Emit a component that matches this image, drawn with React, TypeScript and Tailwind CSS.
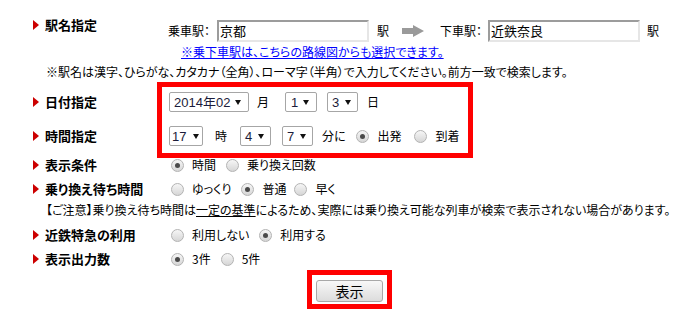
import React from "react";

const Mark = () => (
  <svg width="6" height="10" viewBox="0 0 6 10" className="shrink-0">
    <polygon points="0,0 6,5 0,10" fill="#cc0000" />
  </svg>
);

function Label({ text }: { text: string }) {
  return (
    <div className="flex items-center gap-[6px]">
      <Mark />
      <span className="text-[13px] font-bold leading-[18px] text-black">{text}</span>
    </div>
  );
}

function Radio({ checked, label, gap = "ml-[8px]" }: { checked?: boolean; label: string; gap?: string }) {
  return (
    <span className="flex items-center">
      <span className="flex h-[13px] w-[13px] items-center justify-center rounded-full border border-[#b3b3b3] bg-linear-to-b from-[#f6f6f6] to-[#d6d6d6]">
        {checked && <span className="h-[5px] w-[5px] rounded-full bg-[#4a4a4a]" />}
      </span>
      <span className={gap}>{label}</span>
    </span>
  );
}

function Pick({ value, w, pad = "pl-[5px] pr-[7px]" }: { value: string; w: string; pad?: string }) {
  return (
    <div
      className={`flex h-[20px] ${w} ${pad} items-center justify-between rounded-[2px] border border-[#a6a6a6] bg-white font-['Liberation_Sans','Noto_Sans_CJK_JP',sans-serif] text-[13px] leading-none text-[#1c1c3a]`}
    >
      <span>{value}</span>
      <svg width="6" height="5" viewBox="0 0 6 5">
        <polygon points="0,0 6,0 3,5" fill="#111" />
      </svg>
    </div>
  );
}

function StationInput({ value }: { value: string }) {
  return (
    <div className="flex h-[22px] w-[152px] items-center border-2 border-t-[#9c9c9c] border-l-[#9c9c9c] border-r-[#e6e6e6] border-b-[#e6e6e6] bg-white pl-[1px] text-[13px]">
      {value}
    </div>
  );
}

export default function App() {
  return (
    <div className="h-[310px] w-[699px] overflow-hidden bg-white pl-[33px] font-['Noto_Sans_CJK_JP',sans-serif] text-[12px] text-black [font-feature-settings:'palt']">
      {/* 駅名指定 */}
      <div className="mt-[16px] flex items-start">
        <div className="w-[135px]">
          <Label text="駅名指定" />
        </div>
        <div className="mt-[4px] flex h-[22px] items-center">
          <span className="w-[49px]">乗車駅：</span>
          <StationInput value="京都" />
          <span className="ml-[8px]">駅</span>
          <svg width="22" height="12" viewBox="0 0 22 12" className="ml-[13px]">
            <polygon points="0,3 11,3 11,0 22,6 11,12 11,9 0,9" fill="#9a9a9a" />
          </svg>
          <span className="ml-[16px] w-[48px]">下車駅：</span>
          <StationInput value="近鉄奈良" />
          <span className="ml-[7px]">駅</span>
        </div>
      </div>
      <div className="ml-[148px] mt-[2px] leading-[16px]">
        <a href="#" className="text-[#0000ff] underline">※乗下車駅は、こちらの路線図からも選択できます。</a>
      </div>
      <div className="ml-[13px] mt-[4px] leading-[16px]">
        ※駅名は漢字、ひらがな、カタカナ（全角）、ローマ字（半角）で入力してください。前方一致で検索します。
      </div>

      {/* 日付・時間 */}
      <div className="mt-[2px] flex">
        <div className="flex w-[124px] flex-col gap-[14px] pt-[10px]">
          <div className="flex h-[20px] items-center">
            <Label text="日付指定" />
          </div>
          <div className="flex h-[20px] items-center">
            <Label text="時間指定" />
          </div>
        </div>
        <div className="flex h-[76px] w-[316px] flex-col gap-[14px] border-[5px] border-[#ff0000] pl-[7px] pt-[5px]">
          <div className="flex h-[20px] items-center">
            <Pick value="2014年02" w="w-[80px]" pad="pl-[4px] pr-[7px]" />
            <span className="ml-[8px]">月</span>
            <span className="ml-[16px]"><Pick value="1" w="w-[32px]" /></span>
            <span className="ml-[10px]"><Pick value="3" w="w-[31px]" pad="pl-[4px] pr-[6px]" /></span>
            <span className="ml-[9px]">日</span>
          </div>
          <div className="flex h-[20px] items-center">
            <Pick value="17" w="w-[34px]" pad="pl-[2px] pr-[3px]" />
            <span className="ml-[12px]">時</span>
            <span className="ml-[13px]"><Pick value="4" w="w-[31px]" pad="pl-[4px] pr-[6px]" /></span>
            <span className="ml-[11px]"><Pick value="7" w="w-[31px]" pad="pl-[4px] pr-[6px]" /></span>
            <span className="ml-[9px]">分に</span>
            <span className="ml-[10px]"><Radio checked label="出発" gap="ml-[9px]" /></span>
            <span className="ml-[12px]"><Radio label="到着" gap="ml-[9px]" /></span>
          </div>
        </div>
      </div>

      {/* 表示条件 */}
      <div className="-mt-[5px] flex h-[24px] items-center">
        <div className="w-[138px]">
          <Label text="表示条件" />
        </div>
        <Radio checked label="時間" />
        <span className="ml-[10px]"><Radio label="乗り換え回数" /></span>
      </div>
      <div className="flex h-[24px] items-center">
        <div className="w-[138px]">
          <Label text="乗り換え待ち時間" />
        </div>
        <Radio label="ゆっくり" />
        <span className="ml-[10px]"><Radio checked label="普通" /></span>
        <span className="ml-[8px]"><Radio label="早く" /></span>
      </div>
      <div className="ml-[13px] flex h-[18px] items-center">
        <span>
          【ご注意】乗り換え待ち時間は<span className="underline">一定の基準</span>によるため、実際には乗り換え可能な列車が検索で表示されない場合があります。
        </span>
      </div>
      <div className="mt-[4px] flex h-[24px] items-center">
        <div className="w-[138px]">
          <Label text="近鉄特急の利用" />
        </div>
        <Radio label="利用しない" />
        <span className="ml-[10px]"><Radio checked label="利用する" /></span>
      </div>
      <div className="flex h-[24px] items-center">
        <div className="w-[138px]">
          <Label text="表示出力数" />
        </div>
        <Radio checked label="3件" />
        <span className="ml-[10px]"><Radio label="5件" /></span>
      </div>

      {/* 表示ボタン */}
      <div className="-mt-[1px] ml-[274px] h-[39px] w-[85px] border-[5px] border-[#ff0000] pl-[4px] pt-[5px]">
        <button className="h-[22px] w-[67px] rounded-[3px] border border-[#a8a8a8] bg-linear-to-b from-[#f8f8f8] to-[#dcdcdc] text-[14px] leading-none text-black">
          表示
        </button>
      </div>
    </div>
  );
}
